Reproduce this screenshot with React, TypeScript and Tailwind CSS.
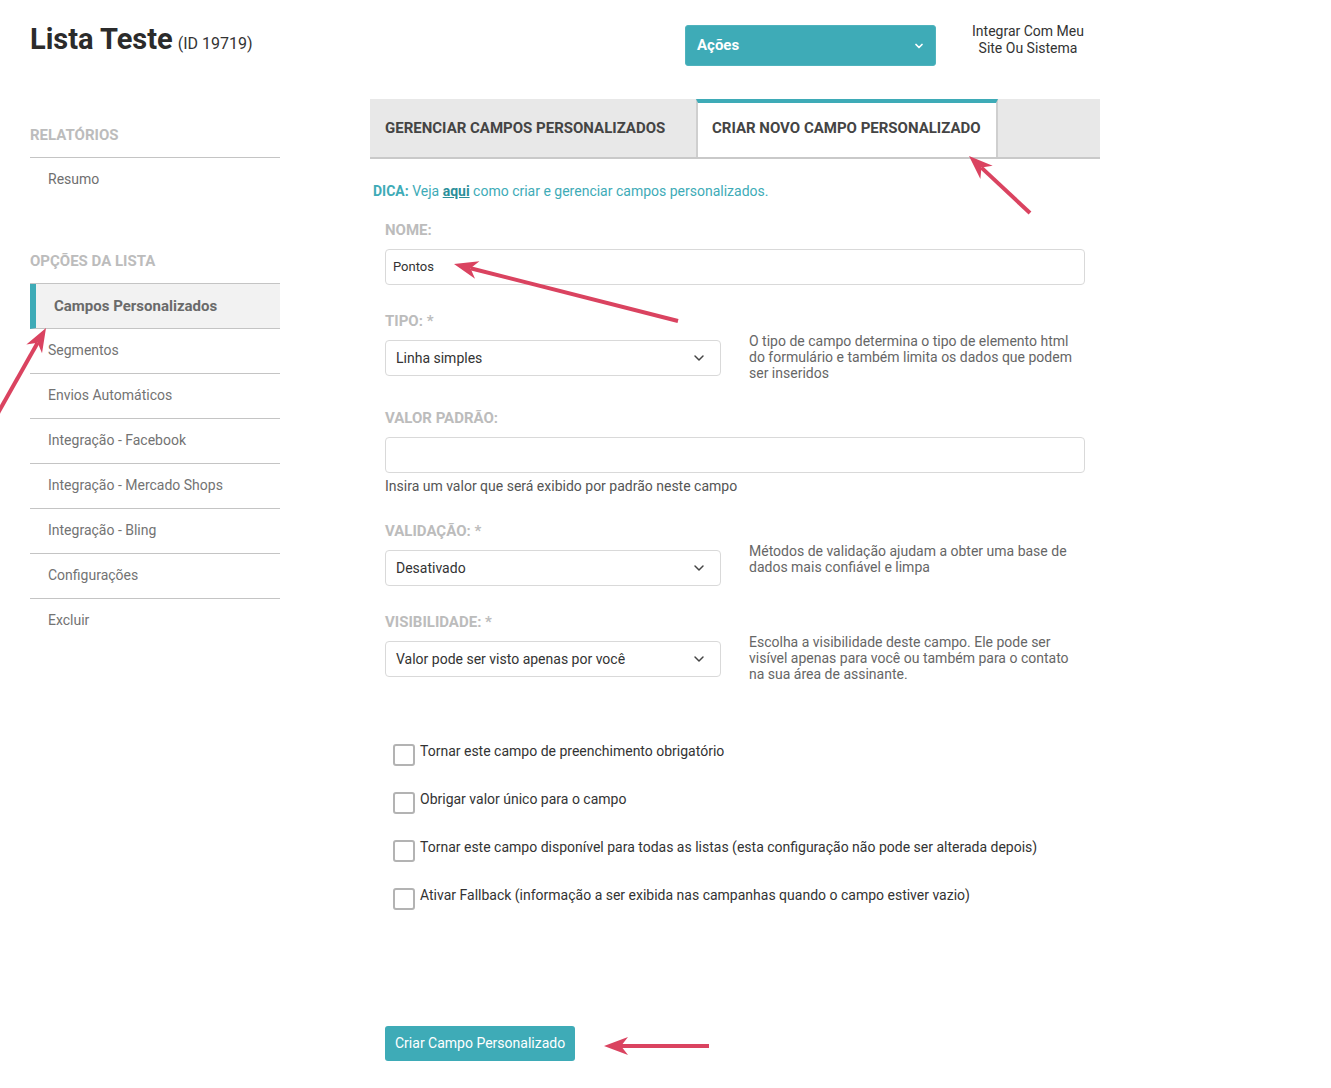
import { ChevronDown } from "lucide-react";

const menu = [
  "Segmentos",
  "Envios Automáticos",
  "Integração - Facebook",
  "Integração - Mercado Shops",
  "Integração - Bling",
  "Configurações",
  "Excluir",
];

const checks = [
  "Tornar este campo de preenchimento obrigatório",
  "Obrigar valor único para o campo",
  "Tornar este campo disponível para todas as listas (esta configuração não pode ser alterada depois)",
  "Ativar Fallback (informação a ser exibida nas campanhas quando o campo estiver vazio)",
];

// annotation arrows drawn over the screenshot
const arrows = [
  { x1: 1030, y1: 213, x2: 969, y2: 156 },
  { x1: 678, y1: 321, x2: 454, y2: 264 },
  { x1: -6, y1: 420, x2: 46, y2: 328 },
  { x1: 709, y1: 1046, x2: 604, y2: 1046 },
];

function Arrow({ x1, y1, x2, y2 }: { x1: number; y1: number; x2: number; y2: number }) {
  const dx = x1 - x2;
  const dy = y1 - y2;
  const len = Math.sqrt(dx * dx + dy * dy);
  const ux = dx / len;
  const uy = dy / len;
  const px = -uy;
  const py = ux;
  const hl = 24;
  const hw = 9;
  const notch = 17;
  const b1 = [x2 + ux * hl + px * hw, y2 + uy * hl + py * hw];
  const b2 = [x2 + ux * hl - px * hw, y2 + uy * hl - py * hw];
  const n = [x2 + ux * notch, y2 + uy * notch];
  return (
    <g>
      <line x1={x1} y1={y1} x2={n[0]} y2={n[1]} stroke="#da4360" strokeWidth={4} />
      <polygon
        points={`${x2},${y2} ${b1[0]},${b1[1]} ${n[0]},${n[1]} ${b2[0]},${b2[1]}`}
        fill="#da4360"
      />
    </g>
  );
}

function Select({ value }: { value: string }) {
  return (
    <div className="flex h-[36px] w-[336px] shrink-0 items-center justify-between rounded-[4px] border border-[#d9d9d9] pl-[10px] pr-[13px] text-[14px] text-[#333]">
      <span>{value}</span>
      <ChevronDown size={16} strokeWidth={2.2} className="text-[#444]" />
    </div>
  );
}

function Label({ children }: { children: React.ReactNode }) {
  return <div className="text-[15px] font-bold leading-[20px] text-[#bcbcbc]">{children}</div>;
}

export default function App() {
  return (
    <div
      className="relative min-h-[1088px] w-full overflow-hidden bg-white"
      style={{ fontFamily: "Roboto, 'Liberation Sans', sans-serif" }}
    >
      {/* header */}
      <div className="flex items-start pl-[30px] pt-[23px]">
        <div className="flex w-[655px] items-baseline">
          <h1 className="-mt-[4px] text-[29px] font-bold leading-[40px] text-[#2b2b2b]">Lista Teste</h1>
          <span className="ml-[5px] text-[16px] text-[#333]">(ID 19719)</span>
        </div>
        <button className="mt-[2px] flex h-[41px] w-[251px] items-center justify-between rounded-[3px] border border-[#4fb3bd] bg-[#3eabb7] pl-[11px] pr-[10px] text-[15px] font-bold text-white">
          <span>Ações</span>
          <ChevronDown size={12} strokeWidth={3.5} />
        </button>
        <div className="ml-[22px] w-[140px] text-center text-[14px] leading-[17px] text-[#333]">
          Integrar Com Meu
          <br />
          Site Ou Sistema
        </div>
      </div>

      <div className="mt-[33px] flex pl-[30px]">
        {/* sidebar */}
        <aside className="w-[250px] shrink-0 pt-[26px]">
          <div className="border-b border-[#c4c4c4] pb-[12px] text-[15px] font-bold leading-[20px] text-[#bcbcbc]">
            RELATÓRIOS
          </div>
          <div className="flex h-[43px] items-center pl-[18px] text-[14px] text-[#6f6f6f]">Resumo</div>
          <div className="mt-[50px] border-b border-[#c4c4c4] pb-[12px] text-[15px] font-bold leading-[20px] text-[#bcbcbc]">
            OPÇÕES DA LISTA
          </div>
          <div className="flex h-[45px] items-center border-b border-l-[6px] border-b-[#c4c4c4] border-l-[#3eabb7] bg-[#f2f2f2] pl-[18px] text-[15px] font-bold text-[#6a6a6a]">
            Campos Personalizados
          </div>
          {menu.map((m, i) => (
            <div
              key={m}
              className={`flex h-[45px] items-center pb-[2px] pl-[18px] text-[14px] text-[#737373] ${
                i < menu.length - 1 ? "border-b border-[#c4c4c4]" : ""
              }`}
            >
              {m}
            </div>
          ))}
        </aside>

        {/* main */}
        <main className="ml-[90px] w-[730px] shrink-0">
          <div className="flex h-[60px] border-b-[2px] border-[#c9c9c9] bg-[#e8e8e8]">
            <div className="flex w-[326px] items-center pl-[15px] text-[15px] font-bold text-[#444]">
              GERENCIAR CAMPOS PERSONALIZADOS
            </div>
            <div className="flex w-[302px] items-center border-x-[2px] border-t-[4px] border-x-[#cfcfcf] border-t-[#3eabb7] bg-white pb-[3px] pl-[14px] text-[15px] font-bold text-[#444]">
              CRIAR NOVO CAMPO PERSONALIZADO
            </div>
          </div>

          <div className="mt-[22px] pl-[3px] text-[14px] leading-[20px] text-[#3eabb7]">
            <b>DICA:</b> Veja <b className="text-[#2c8f9a] underline">aqui</b> como criar e gerenciar campos
            personalizados.
          </div>

          <div className="px-[15px]">
            <div className="mt-[19px]">
              <Label>NOME:</Label>
              <div className="mt-[9px] flex h-[36px] items-center rounded-[4px] border border-[#d9d9d9] pl-[7px] text-[13px] text-[#333]">
                Pontos
              </div>
            </div>

            <div className="mt-[26px]">
              <Label>TIPO: *</Label>
              <div className="mt-[9px] flex items-start">
                <Select value="Linha simples" />
                <p className="-mt-[7px] ml-[28px] w-[330px] text-[14px] leading-[16px] text-[#666]">
                  O tipo de campo determina o tipo de elemento html do formulário e também limita os dados que podem
                  ser inseridos
                </p>
              </div>
            </div>

            <div className="mt-[27px]">
              <Label>VALOR PADRÃO:</Label>
              <div className="mt-[9px] h-[36px] rounded-[4px] border border-[#d9d9d9]" />
              <p className="mt-[5px] text-[14px] leading-[16px] text-[#555]">
                Insira um valor que será exibido por padrão neste campo
              </p>
            </div>

            <div className="mt-[27px]">
              <Label>VALIDAÇÃO: *</Label>
              <div className="mt-[9px] flex items-start">
                <Select value="Desativado" />
                <p className="-mt-[7px] ml-[28px] w-[330px] text-[14px] leading-[16px] text-[#666]">
                  Métodos de validação ajudam a obter uma base de dados mais confiável e limpa
                </p>
              </div>
            </div>

            <div className="mt-[26px]">
              <Label>VISIBILIDADE: *</Label>
              <div className="mt-[9px] flex items-start">
                <Select value="Valor pode ser visto apenas por você" />
                <p className="-mt-[7px] ml-[28px] w-[330px] text-[14px] leading-[16px] text-[#666]">
                  Escolha a visibilidade deste campo. Ele pode ser visível apenas para você ou também para o contato
                  na sua área de assinante.
                </p>
              </div>
            </div>

            <div className="mt-[59px] pl-[8px]">
              {checks.map((c) => (
                <div key={c} className="flex h-[48px] items-start">
                  <span className="mt-[3px] h-[22px] w-[22px] shrink-0 rounded-[3px] border-[2px] border-[#b3b3b3]" />
                  <span className="ml-[5px] text-[14px] leading-[20px] text-[#333]">{c}</span>
                </div>
              ))}
            </div>

            <button className="mt-[93px] h-[35px] rounded-[3px] bg-[#3eabb7] px-[10px] text-[14px] text-white">
              Criar Campo Personalizado
            </button>
          </div>
        </main>
      </div>

      <svg className="pointer-events-none absolute left-0 top-0" width={1331} height={1088}>
        {arrows.map((a, i) => (
          <Arrow key={i} {...a} />
        ))}
      </svg>
    </div>
  );
}
